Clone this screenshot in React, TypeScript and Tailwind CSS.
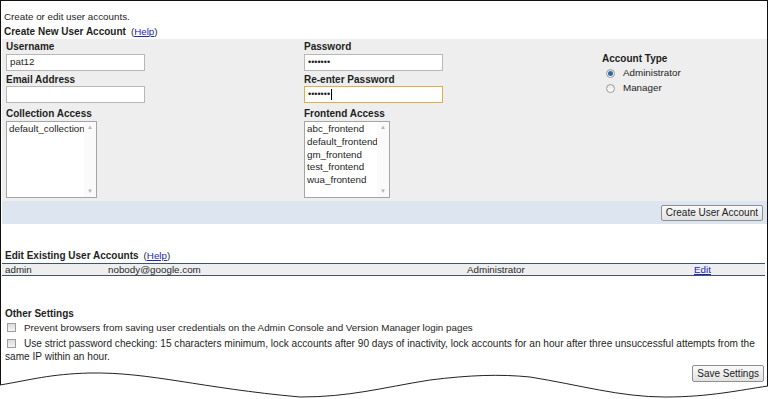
import React from 'react';

const FRONTENDS = ['abc_frontend', 'default_frontend', 'gm_frontend', 'test_frontend', 'wua_frontend'];

function ListBox({ items, width }: { items: string[]; width: string }) {
  return (
    <div className={`flex h-[77px] ${width} border border-[#a5a5a5] bg-white`}>
      <div className="flex-1 pl-[2px] pt-[1px] leading-[12.8px] overflow-hidden whitespace-nowrap">
        {items.map((it) => (
          <div key={it}>{it}</div>
        ))}
      </div>
      <div className="flex w-[12px] flex-col justify-between items-center bg-[#fafafa] py-[1px] text-[6px] text-[#b5b5b5]">
        <span>▲</span>
        <span>▼</span>
      </div>
    </div>
  );
}

function Radio({ checked, label }: { checked?: boolean; label: string }) {
  return (
    <div className="flex items-center h-[15px] pl-[4px] gap-[8px] text-[9.8px]">
      <span className="flex h-[9px] w-[9px] items-center justify-center rounded-full border border-[#9a9a9a] bg-gradient-to-b from-[#e6e6e6] to-white">
        {checked && <span className="h-[5px] w-[5px] rounded-full bg-[#2a6aa8]" />}
      </span>
      <span>{label}</span>
    </div>
  );
}

function Check() {
  return (
    <span className="inline-block h-[9px] w-[9px] align-[-1px] ml-[2px] mr-[8px] border border-[#9d9d9d] bg-gradient-to-b from-[#dcdcdc] to-[#f4f4f4]" />
  );
}

function Heading({ title, help }: { title: string; help?: boolean }) {
  return (
    <div className="flex items-baseline h-[12px] leading-[12px] pl-[2px]">
      <b className="text-[10px]">{title}</b>
      {help && (
        <span className="ml-[5px]">
          (<a className="text-[#2424b8] underline">Help</a>)
        </span>
      )}
    </div>
  );
}

export default function App() {
  return (
    <div className="relative w-[770px] h-[399px] overflow-hidden bg-white font-['Liberation_Sans',Arial,sans-serif] text-[9.8px] text-[#1e1e1e]">
      <div className="pl-[2px] pr-[5px] pt-[11px]">
        <p className="pl-[2px] h-[12px] leading-[12px]">Create or edit user accounts.</p>
        <div className="mt-[3px]">
          <Heading title="Create New User Account" help />
        </div>

        {/* create form */}
        <div className="mt-[1px] mr-[-2px] bg-[#eeeeee]">
          <div className="grid grid-cols-[298px_298px_1fr] pl-[4px] pb-[3px]">
            <div>
              <div className="mt-[2px] leading-[12px] font-bold text-[10px]">Username</div>
              <div className="mt-[1px] flex items-center h-[17px] w-[139px] border border-[#b8b8b8] bg-white pl-[3px]">pat12</div>
              <div className="mt-[3px] leading-[12px] font-bold text-[10px]">Email Address</div>
              <div className="h-[17px] w-[139px] border border-[#b8b8b8] bg-white" />
              <div className="mt-[5px] leading-[12px] font-bold text-[10px]">Collection Access</div>
              <div className="mt-[1px]">
                <ListBox items={['default_collection']} width="w-[91px]" />
              </div>
            </div>
            <div>
              <div className="mt-[2px] leading-[12px] font-bold text-[10px]">Password</div>
              <div className="mt-[1px] flex items-center h-[17px] w-[139px] border border-[#b8b8b8] bg-white pl-[3px] text-[9px]">•••••••</div>
              <div className="mt-[3px] leading-[12px] font-bold text-[10px]">Re-enter Password</div>
              <div className="flex items-center h-[17px] w-[139px] border border-[#e3ad45] bg-white pl-[3px] text-[9px]">
                •••••••<span className="ml-[1px] h-[11px] w-px bg-black" />
              </div>
              <div className="mt-[5px] leading-[12px] font-bold text-[10px]">Frontend Access</div>
              <div className="mt-[1px]">
                <ListBox items={FRONTENDS} width="w-[86px]" />
              </div>
            </div>
            <div className="pt-[14px]">
              <div className="leading-[12px] font-bold text-[10px]">Account Type</div>
              <div className="mt-[1px]">
                <Radio checked label="Administrator" />
                <Radio label="Manager" />
              </div>
            </div>
          </div>
          <div className="flex justify-end h-[23px] items-center bg-[#dce5f0] pr-[4px]">
            <button className="h-[16px] px-[4px] border border-[#8f8f8f] rounded-[2px] bg-gradient-to-b from-[#fafafa] to-[#e2e2e2] text-[10px] leading-[14px] text-[#222]">
              Create User Account
            </button>
          </div>
        </div>

        {/* existing accounts */}
        <div className="mt-[26px] pl-[1px]">
          <Heading title="Edit Existing User Accounts" help />
        </div>
        <div className="mt-[1px] grid grid-cols-[103px_359px_227px_1fr] h-[13px] leading-[11px] items-center border-y border-[#3b5868] bg-[#eeeeee] pl-[3px] text-[#2a2a2a]">
          <span>admin</span>
          <span>nobody@google.com</span>
          <span>Administrator</span>
          <a className="text-[#2424b8] underline">Edit</a>
        </div>

        {/* other settings */}
        <div className="mt-[32px] pl-[1px]">
          <Heading title="Other Settings" />
        </div>
        <div className="mt-[1px] pl-[3px] leading-[13px]">
          <Check />
          Prevent browsers from saving user credentials on the Admin Console and Version Manager login pages
        </div>
        <div className="mt-[3px] pl-[3px] pr-[3px] leading-[13px] text-[10.1px]">
          <Check />
          Use strict password checking: 15 characters minimum, lock accounts after 90 days of inactivity, lock accounts for an hour after three unsuccessful attempts from the same IP within an hour.
        </div>
        <div className="mt-[2px] flex justify-end pr-[1px]">
          <button className="h-[17px] px-[4px] border border-[#8f8f8f] rounded-[2px] bg-gradient-to-b from-[#fafafa] to-[#e2e2e2] text-[10px] leading-[14px] text-[#222]">
            Save Settings
          </button>
        </div>
      </div>

      {/* torn page frame */}
      <svg className="absolute inset-0" width="770" height="399" viewBox="0 0 770 399">
        <path
          d="M0,385 C30,380 50,374 90,373 C150,372 200,388 300,397 C350,397 380,388 430,380 C470,375 500,374 530,377 C580,385 620,397 665,397 C710,397 740,390 768,386 L770,399 L0,399 Z"
          fill="white"
        />
        <path
          d="M0.5,0 L0.5,385 M0,0.5 L768,0.5 M767.5,0 L767.5,386"
          stroke="#111"
          strokeWidth="1"
          fill="none"
        />
        <path
          d="M0,385 C30,380 50,374 90,373 C150,372 200,388 300,397 C350,397 380,388 430,380 C470,375 500,374 530,377 C580,385 620,397 665,397 C710,397 740,390 768,386"
          stroke="#222"
          strokeWidth="1"
          fill="none"
        />
      </svg>
    </div>
  );
}
